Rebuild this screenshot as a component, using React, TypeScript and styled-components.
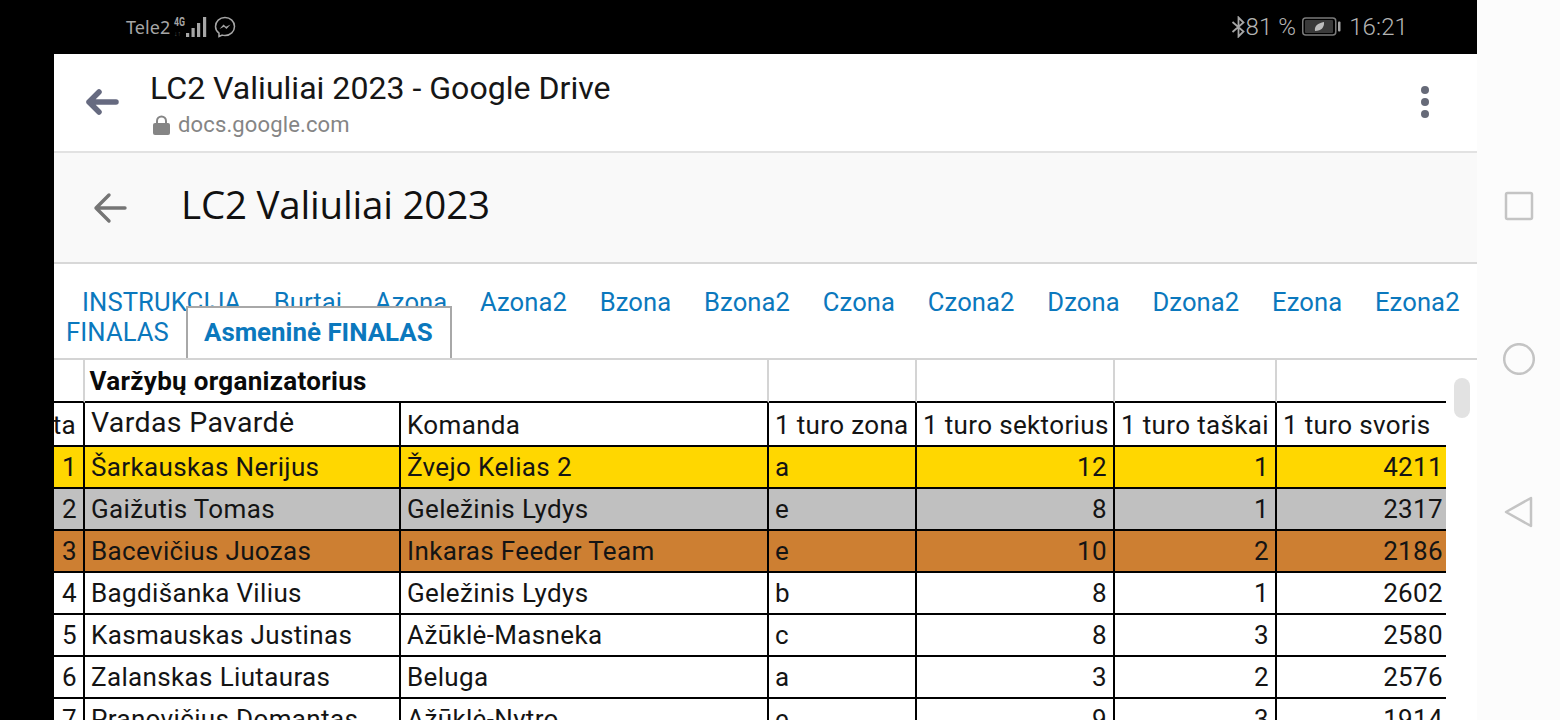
import React from "react";
import styled, { createGlobalStyle } from "styled-components";

const Global = createGlobalStyle`
  html, body { margin: 0; padding: 0; background: #000; overflow: hidden; }
  * { box-sizing: border-box; }
  body { font-family: Roboto, "Liberation Sans", sans-serif; }
`;

const Screen = styled.div`
  width: 1560px; height: 720px; display: flex; overflow: hidden; background: #000;
`;
const Device = styled.div`
  width: 1477px; height: 720px; display: flex; flex-direction: column; flex: none;
`;
const NavBar = styled.nav`
  width: 83px; flex: none; background: #fcfcfc; position: relative;
  display: flex; flex-direction: column; align-items: center; padding-top: 190px; gap: 121px;
`;
const StatusBar = styled.div`
  height: 54px; flex: none; background: #000; color: #a6a6a6; display: flex;
  align-items: center; justify-content: space-between; padding: 0 69px 0 126px;
`;
const StatusGroup = styled.div`display: flex; align-items: center;`;
const Carrier = styled.span`font-size: 18px; letter-spacing: 0.1px; font-family: "Noto Sans", sans-serif;`;
const StatusText = styled.span`font-size: 24px; font-weight: 300; letter-spacing: 0.1px; color: #b4b4b4;`;
const Body = styled.div`
  flex: 1; min-height: 0; margin-left: 54px; background: #fff; display: flex; flex-direction: column; overflow: hidden; position: relative;
`;
const ChromeBar = styled.header`
  height: 99px; flex: none; background: #fff; border-bottom: 2px solid #e2e2e2;
  display: flex; align-items: flex-start; padding: 16px 0 0 31px; position: relative;
`;
const ChromeText = styled.div`margin-left: 31px; display: flex; flex-direction: column;`;
const PageTitle = styled.div`font-size: 32.1px; line-height: 36px; color: #161616; white-space: nowrap;`;
const UrlRow = styled.div`display: flex; align-items: center; gap: 8px; margin-top: 7px; margin-left: 3px;`;
const UrlText = styled.span`font-size: 22px; line-height: 24px; color: #858585; letter-spacing: 0.14px;`;
const Dots = styled.div`
  margin-left: auto; margin-right: 48px; margin-top: 16px; display: flex; flex-direction: column; gap: 4px;
`;
const Dot = styled.i`display: block; width: 8px; height: 8px; border-radius: 50%; background: #666a78;`;
const DriveBar = styled.div`
  height: 111px; flex: none; background: #f9f9f9; border-bottom: 2px solid #d8d8d8;
  display: flex; align-items: center; padding-left: 39px; box-shadow: 0 1px 2px rgba(0,0,0,.06);
`;
const DriveTitle = styled.h1`
  margin: 0 0 8px 54px; font-size: 38.5px; font-weight: 400; color: #111; white-space: nowrap;
  font-family: "Open Sans", sans-serif; letter-spacing: -0.2px;
`;
const Tabs = styled.div`
  height: 96px; flex: none; border-bottom: 2px solid #d4d4d4; background: #fff; position: relative;
`;
const TabLine = styled.div<{ $top?: boolean }>`
  display: flex; align-items: flex-end; white-space: nowrap;
  height: ${(p) => (p.$top ? "53px" : "41px")};
  padding-left: ${(p) => (p.$top ? "28px" : "12px")};
  gap: 32.7px;
`;
const Tab = styled.span`font-size: 25.6px; line-height: 29px; color: #0b78bd; letter-spacing: 0.1px;`;
const SecondTab = styled(Tab)`padding-bottom: 11px;`;
const ActiveTab = styled.span`
  position: absolute; left: 132px; top: 42px; width: 266px; height: 52px;
  background: #fff; border: 2px solid #a8a8a8; border-bottom: 0;
  font-size: 25.9px; font-weight: 700; color: #0b78bd; padding: 9px 0 0 16px; white-space: nowrap;
`;
const Sheet = styled.table`
  border-collapse: separate; border-spacing: 0; table-layout: fixed; width: 1392px; background: #fff;
  font-size: 26px; color: #141414;
`;
const TopCell = styled.td<{ $last?: boolean }>`
  height: 43px; padding: 0 0 0 4.5px; font-size: 26px; letter-spacing: 0.3px; font-weight: 700; white-space: nowrap; color: #0a0a0a;
  border-bottom: 2px solid #000;
  border-right: ${(p) => (p.$last ? "0" : "2px solid #d4d4d4")};
`;
const Cell = styled.td<{ $bg?: string; $right?: boolean; $last?: boolean; $big?: boolean; $rank?: boolean }>`
  height: 42px; padding: 0 5px 0 ${(p) => (p.$right ? "0" : "6px")};
  background: ${(p) => p.$bg || "#fff"};
  text-align: ${(p) => (p.$right ? "right" : "left")};
  border-bottom: 2px solid #000;
  border-right: ${(p) => (p.$last ? "0" : "2px solid #000")};
  overflow: hidden; white-space: nowrap; letter-spacing: 0.35px;
  padding-right: ${(p) => (p.$rank ? "6px" : p.$last ? "3px" : "6px")};
`;
const HeadCell = styled(Cell)`
  height: 44px;
  padding-top: ${(p) => (p.$big ? "0" : "2px")};
  padding-bottom: ${(p) => (p.$big ? "3px" : "0")};
  font-size: ${(p) => (p.$big ? "28.5px" : "26px")};
  padding-right: 0;
`;
const RankHead = styled.div`display: flex; justify-content: flex-end; padding-right: 7px;`;
const Thumb = styled.div`
  position: absolute; left: 1400px; top: 324px; width: 16px; height: 40px; background: #e2e2e2; border-radius: 8px;
`;

const ArrowBold = () => (
  <svg width="34" height="28" viewBox="0 0 34 28" style={{ marginTop: 18 }}>
    <path d="M31 14H4M14 4L4 14l10 10" fill="none" stroke="#666a80" strokeWidth="5.5" strokeLinecap="round" strokeLinejoin="round" />
  </svg>
);
const ArrowThin = () => (
  <svg width="34" height="32" viewBox="0 0 34 32">
    <path d="M32 16H3M16 3L3 16l13 13" fill="none" stroke="#757575" strokeWidth="3.4" strokeLinecap="round" strokeLinejoin="round" />
  </svg>
);
const Lock = () => (
  <svg width="17" height="20" viewBox="0 0 17 20">
    <path d="M4 9V6a4.5 4.5 0 0 1 9 0v3" fill="none" stroke="#858585" strokeWidth="2" />
    <rect x="0" y="8" width="17" height="12" rx="2" fill="#858585" />
  </svg>
);
const Signal = () => (
  <svg width="37" height="26" viewBox="0 0 37 26">
    <text x="3" y="12" fontSize="12" fontWeight="700" fill="#a6a6a6" fontFamily="Roboto" textLength="11" lengthAdjust="spacingAndGlyphs">4G</text>
    <text x="3" y="22" fontSize="7" fill="#555" fontFamily="Roboto">↓↑</text>
    <rect x="15" y="19" width="3.2" height="4" fill="#a6a6a6" />
    <rect x="20.500" y="14" width="3.2" height="9" fill="#a6a6a6" />
    <rect x="26" y="9" width="3.2" height="14" fill="#a6a6a6" />
    <rect x="32" y="3" width="3.2" height="20" fill="#a6a6a6" />
  </svg>
);
const Messenger = () => (
  <svg width="22" height="22" viewBox="0 0 22 22" style={{ marginLeft: 6 }}>
    <path d="M11 1.5c5.4 0 9.5 3.9 9.5 9s-4.100 9-9.500 9c-1 0-1.900-.1-2.800-.4L5 20.500v-3.300C2.900 15.500 1.500 13.200 1.500 10.500c0-5.100 4.100-9 9.500-9z" fill="none" stroke="#a6a6a6" strokeWidth="1.500" />
    <path d="M5.500 13l4-4.500 2.500 2.300 4.500-2.300-4 4.500-2.500-2.300z" fill="#a6a6a6" />
  </svg>
);
const Bluetooth = () => (
  <svg width="15" height="22" viewBox="0 0 15 22">
    <path d="M1.500 6L12.500 15.500 7.500 20.500V1.500L12.500 6.500 1.500 16" fill="none" stroke="#a6a6a6" strokeWidth="1.800" />
  </svg>
);
const Battery = () => (
  <svg width="39" height="20" viewBox="0 0 39 20" style={{ margin: "0 8px 0 6px" }}>
    <rect x="0.750" y="1" width="33" height="17" rx="3" fill="none" stroke="#7a7a7a" strokeWidth="1.500" />
    <rect x="3" y="3" width="28" height="13" rx="1" fill="#3a3a3a" />
    <path d="M13 14c-1-5 3-8 9-9 .5 5-2.500 9-9 9z" fill="#bdbdbd" />
    <rect x="36" y="4.500" width="2.500" height="10" rx="1" fill="#a6a6a6" />
  </svg>
);
const NavIcon = ({ kind }: { kind: "square" | "circle" | "back" }) => (
  <svg width="32" height="32" viewBox="0 0 32 32">
    {kind === "square" && <rect x="3" y="3" width="26" height="26" rx="1.500" fill="none" stroke="#c4c4c4" strokeWidth="2.500" />}
    {kind === "circle" && <circle cx="16" cy="16" r="14.800" fill="none" stroke="#c4c4c4" strokeWidth="2.500" />}
    {kind === "back" && <path d="M28 2L3 16l25 14z" fill="none" stroke="#c4c4c4" strokeWidth="2.500" strokeLinejoin="round" />}
  </svg>
);

const tabs = ["INSTRUKCIJA", "Burtai", "Azona", "Azona2", "Bzona", "Bzona2", "Czona", "Czona2", "Dzona", "Dzona2", "Ezona", "Ezona2"];

type Row = [string, string, string, string, string, string, string, string?];
const rows: Row[] = [
  ["1", "Šarkauskas Nerijus", "Žvejo Kelias 2", "a", "12", "1", "4211", "#ffd700"],
  ["2", "Gaižutis Tomas", "Geležinis Lydys", "e", "8", "1", "2317", "#c0c0c0"],
  ["3", "Bacevičius Juozas", "Inkaras Feeder Team", "e", "10", "2", "2186", "#cd7f32"],
  ["4", "Bagdišanka Vilius", "Geležinis Lydys", "b", "8", "1", "2602"],
  ["5", "Kasmauskas Justinas", "Ažūklė-Masneka", "c", "8", "3", "2580"],
  ["6", "Zalanskas Liutauras", "Beluga", "a", "3", "2", "2576"],
  ["7", "Pranovičius Domantas", "Ažūklė-Nytro", "e", "9", "3", "1914"],
];

export default function App() {
  return (
    <Screen>
      <Global />
      <Device>
        <StatusBar>
          <StatusGroup>
            <Carrier>Tele2</Carrier>
            <Signal />
            <Messenger />
          </StatusGroup>
          <StatusGroup>
            <Bluetooth />
            <StatusText>81 %</StatusText>
            <Battery />
            <StatusText>16:21</StatusText>
          </StatusGroup>
        </StatusBar>
        <Body>
          <ChromeBar>
            <ArrowBold />
            <ChromeText>
              <PageTitle>LC2 Valiuliai 2023 - Google Drive</PageTitle>
              <UrlRow>
                <Lock />
                <UrlText>docs.google.com</UrlText>
              </UrlRow>
            </ChromeText>
            <Dots><Dot /><Dot /><Dot /></Dots>
          </ChromeBar>
          <DriveBar>
            <ArrowThin />
            <DriveTitle>LC2 Valiuliai 2023</DriveTitle>
          </DriveBar>
          <Tabs>
            <TabLine $top>{tabs.map((t) => <Tab key={t}>{t}</Tab>)}</TabLine>
            <TabLine><SecondTab>FINALAS</SecondTab></TabLine>
            <ActiveTab>Asmeninė FINALAS</ActiveTab>
          </Tabs>
          <Sheet>
            <colgroup>
              <col style={{ width: 31 }} />
              <col style={{ width: 316 }} />
              <col style={{ width: 368 }} />
              <col style={{ width: 148 }} />
              <col style={{ width: 198 }} />
              <col style={{ width: 162 }} />
              <col style={{ width: 169 }} />
            </colgroup>
            <tbody>
              <tr>
                <TopCell />
                <TopCell colSpan={2}>Varžybų organizatorius</TopCell>
                <TopCell />
                <TopCell />
                <TopCell />
                <TopCell $last />
              </tr>
              <tr>
                <HeadCell><RankHead>ta</RankHead></HeadCell>
                <HeadCell $big>Vardas Pavardė</HeadCell>
                <HeadCell>Komanda</HeadCell>
                <HeadCell>1 turo zona</HeadCell>
                <HeadCell>1 turo sektorius</HeadCell>
                <HeadCell>1 turo taškai</HeadCell>
                <HeadCell $last>1 turo svoris</HeadCell>
              </tr>
              {rows.map((r) => (
                <tr key={r[0]}>
                  <Cell $bg={r[7]} $right $rank>{r[0]}</Cell>
                  <Cell $bg={r[7]}>{r[1]}</Cell>
                  <Cell $bg={r[7]}>{r[2]}</Cell>
                  <Cell $bg={r[7]}>{r[3]}</Cell>
                  <Cell $bg={r[7]} $right>{r[4]}</Cell>
                  <Cell $bg={r[7]} $right>{r[5]}</Cell>
                  <Cell $bg={r[7]} $right $last>{r[6]}</Cell>
                </tr>
              ))}
            </tbody>
          </Sheet>
          <Thumb />
        </Body>
      </Device>
      <NavBar>
        <NavIcon kind="square" />
        <NavIcon kind="circle" />
        <NavIcon kind="back" />
      </NavBar>
    </Screen>
  );
}
